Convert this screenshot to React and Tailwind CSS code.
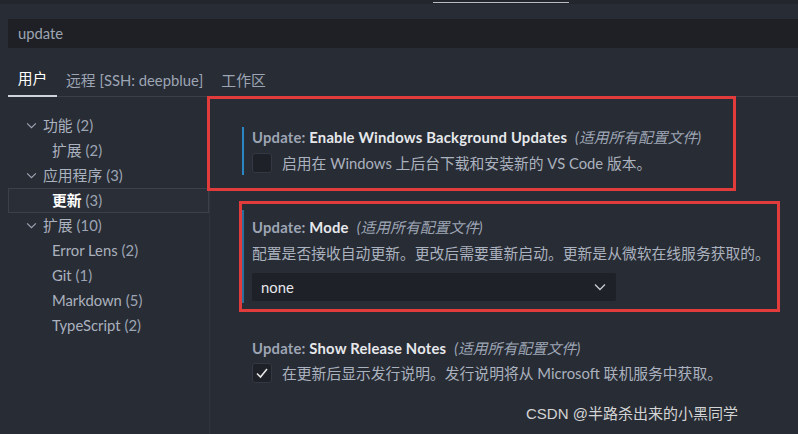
import React from "react";

const font = { fontFamily: 'Lato, "Noto Sans CJK SC", sans-serif' };

function Chevron({ className = "" }) {
  return (
    <svg viewBox="0 0 12 8" className={className} fill="none" stroke="currentColor" strokeWidth="1.3">
      <polyline points="1,1.5 6,6.5 11,1.5" />
    </svg>
  );
}

function TreeRow({ label, count, level, open, selected }) {
  return (
    <div
      className={
        "flex items-center h-[25px] " +
        (selected ? "border border-[#3b404b] bg-[#2a2e36]" : "border border-transparent")
      }
    >
      <div className={level === 0 ? "w-[34px] flex justify-end pr-[6px]" : "w-[43px]"}>
        {open && <Chevron className="w-[11px] h-[7px] text-[#9da5b4]" />}
      </div>
      <span className={selected ? "font-bold text-white" : "text-[#abb2bf]"}>{label}</span>
      <span className="ml-1 text-[#9da5b4]">({count})</span>
    </div>
  );
}

function Checkbox({ checked }) {
  return (
    <div className="w-[20px] h-[20px] rounded-[3px] bg-[#1e2127] border border-[#333842] flex items-center justify-center">
      {checked && (
        <svg viewBox="0 0 16 16" className="w-[16px] h-[16px]" fill="none" stroke="#e6e6e6" strokeWidth="1.6">
          <polyline points="3,8.5 6.5,12 13,4" />
        </svg>
      )}
    </div>
  );
}

function Title({ name }) {
  return (
    <div className="h-[20px] leading-[20px] whitespace-nowrap">
      <span className="font-bold text-[#9da5b4] tracking-[0.2px]">Update: </span>
      <span className="font-bold text-[#e6e8ec] tracking-[0.2px]">{name}</span>
      <span className="italic text-[#9da5b4] ml-[8px]">(适用所有配置文件)</span>
    </div>
  );
}

export default function App() {
  return (
    <div className="w-[798px] h-[434px] bg-[#282c34] text-[14.8px] relative overflow-hidden" style={font}>
      {/* top strip */}
      <div className="h-[4px] bg-[#23262d] pt-[2px]">
        <div className="ml-[433px] w-[136px] h-px bg-[#b8bcc4]" />
      </div>

      {/* search */}
      <div className="mt-[15px] ml-[8px] h-[29px] bg-[#1e2025] flex items-center pl-[10px] text-[#9da5b4]">
        update
      </div>

      {/* tabs */}
      <div className="ml-[8px] h-[49px] flex border-b border-[#3a3f4a]">
        <div className="w-[49px] flex items-end justify-center pb-[6px] text-white border-b-2 border-[#d0d3d9] mb-[-1px]">用户</div>
        <div className="ml-[9px] flex items-end pb-[5px] text-[#9da5b4]">远程 [SSH: deepblue]</div>
        <div className="ml-[18px] flex items-end pb-[5px] text-[#9da5b4]">工作区</div>
      </div>

      <div className="flex">
        {/* tree */}
        <div className="w-[202px] ml-[8px] pt-[16px] h-[337px] border-r border-[#30343c]">
          <TreeRow label="功能" count="2" level={0} open />
          <TreeRow label="扩展" count="2" level={1} />
          <TreeRow label="应用程序" count="3" level={0} open />
          <TreeRow label="更新" count="3" level={1} selected />
          <TreeRow label="扩展" count="10" level={0} open />
          <TreeRow label="Error Lens" count="2" level={1} />
          <TreeRow label="Git" count="1" level={1} />
          <TreeRow label="Markdown" count="5" level={1} />
          <TreeRow label="TypeScript" count="2" level={1} />
        </div>

        {/* settings */}
        <div className="flex-1 pl-[32px] pt-[32px]">
          <div className="border-l-2 border-[#2b87c4] pl-[8px] h-[48px]">
            <div className="mt-[-2px]">
              <Title name="Enable Windows Background Updates" />
            </div>
            <div className="mt-[6px] flex items-center h-[20px]">
              <Checkbox />
              <span className="ml-[10px] text-[#abb2bf]">启用在 Windows 上后台下载和安装新的 VS Code 版本。</span>
            </div>
          </div>

          <div className="mt-[35px] border-l-2 border-[#2b6f9a] pl-[8px] pt-[7px] pb-[2px]">
            <Title name="Mode" />
            <div className="mt-[6px] h-[20px] leading-[20px] text-[#abb2bf] whitespace-nowrap">
              配置是否接收自动更新。更改后需要重新启动。更新是从微软在线服务获取的。
            </div>
            <div className="mt-[10px] w-[364px] h-[28px] bg-[#1e2127] rounded-[2px] flex items-center justify-between pl-[9px] pr-[10px] text-[#e6e8ec]">
              <span>none</span>
              <Chevron className="w-[12px] h-[8px] text-[#c8ccd4]" />
            </div>
          </div>

          <div className="mt-[35px] pl-[10px]">
            <Title name="Show Release Notes" />
            <div className="mt-[5px] flex items-center h-[20px]">
              <Checkbox checked />
              <span className="ml-[10px] text-[#abb2bf]">在更新后显示发行说明。发行说明将从 Microsoft 联机服务中获取。</span>
            </div>
          </div>
        </div>
      </div>

      {/* annotation boxes */}
      <div className="absolute left-[207px] top-[96px] w-[529px] h-[95px] border-[3px] border-[#e23b3b]" />
      <div className="absolute left-[239px] top-[201px] w-[541px] h-[111px] border-[3px] border-[#e23b3b]" />

      {/* watermark */}
      <div className="absolute left-[526px] top-[403px] text-[15px] text-[#d4d4d4] whitespace-nowrap" style={{ fontFamily: '"Liberation Sans", "Noto Sans CJK SC", sans-serif' }}>
        CSDN @半路杀出来的小黑同学
      </div>
    </div>
  );
}
